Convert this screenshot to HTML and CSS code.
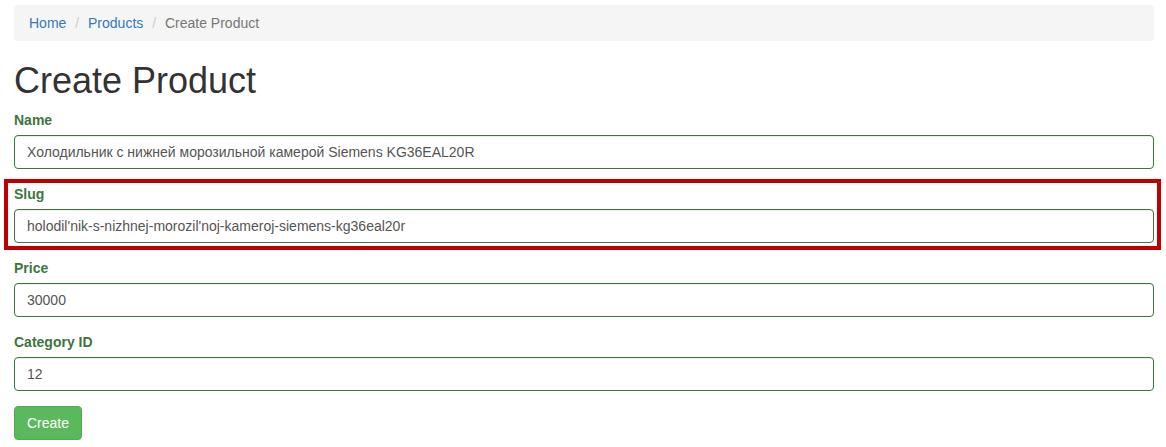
FILE: index.html
```html
<!DOCTYPE html>
<html lang="ru">
<head>
<meta charset="utf-8">
<title>Create Product</title>
<link rel="stylesheet" href="styles.css">
</head>
<body>
<div class="container">
  <ol class="breadcrumb">
    <li><a href="#">Home</a></li>
    <li><a href="#">Products</a></li>
    <li class="active">Create Product</li>
  </ol>
  <h1>Create Product</h1>
  <form class="form">
    <div class="form-group has-success">
      <label class="control-label">Name</label>
      <input class="form-control" type="text" value="Холодильник с нижней морозильной камерой Siemens KG36EAL20R">
    </div>
    <div class="form-group has-success highlighted">
      <label class="control-label">Slug</label>
      <input class="form-control" type="text" value="holodil'nik-s-nizhnej-morozil'noj-kameroj-siemens-kg36eal20r">
    </div>
    <div class="form-group has-success">
      <label class="control-label">Price</label>
      <input class="form-control" type="text" value="30000">
    </div>
    <div class="form-group has-success">
      <label class="control-label">Category ID</label>
      <input class="form-control" type="text" value="12">
    </div>
    <button type="button" class="btn btn-success">Create</button>
  </form>
</div>
</body>
</html>
```
FILE: styles.css
```css
* { box-sizing: border-box; }
html, body { margin: 0; padding: 0; background: #fff; }
body {
  font-family: "Liberation Sans", Arial, sans-serif;
  font-size: 14px;
  line-height: 1.42857143;
  color: #333;
}
.container {
  width: 1140px;
  margin-left: 14px;
  padding-top: 5px;
}
.breadcrumb {
  list-style: none;
  margin: 0 0 20px;
  padding: 8px 15px;
  background: #f5f5f5;
  border-radius: 4px;
}
.breadcrumb li { display: inline-block; }
.breadcrumb li + li::before {
  content: "/\00a0";
  padding: 0 5px;
  color: #ccc;
}
.breadcrumb a { color: #337ab7; text-decoration: none; }
.breadcrumb .active { color: #777; }
h1 {
  font-size: 36px;
  font-weight: 500;
  line-height: 1.1;
  margin: 20px 0 9px;
  color: #333;
}
.form-group { margin-bottom: 15px; }
.control-label {
  display: inline-block;
  max-width: 100%;
  margin-bottom: 5px;
  font-weight: bold;
}
.has-success .control-label { color: #3c763d; }
.form-control {
  display: block;
  width: 100%;
  height: 34px;
  padding: 6px 12px;
  font-family: inherit;
  font-size: 14px;
  line-height: 1.42857143;
  color: #555;
  background: #fff;
  border: 1px solid #ccc;
  border-radius: 4px;
  box-shadow: inset 0 1px 1px rgba(0,0,0,.075);
  margin: 0;
}
.has-success .form-control { border-color: #3c763d; }
.highlighted { position: relative; }
.highlighted::after {
  content: "";
  position: absolute;
  top: -5px;
  left: -10px;
  right: -7px;
  bottom: -7px;
  border: 4px solid #c00000;
  pointer-events: none;
}
.btn {
  display: inline-block;
  padding: 6px 12px;
  font-family: inherit;
  font-size: 14px;
  line-height: 1.42857143;
  border: 1px solid transparent;
  border-radius: 4px;
  cursor: pointer;
}
.btn-success {
  color: #fff;
  background: #5cb85c;
  border-color: #4cae4c;
}
```
